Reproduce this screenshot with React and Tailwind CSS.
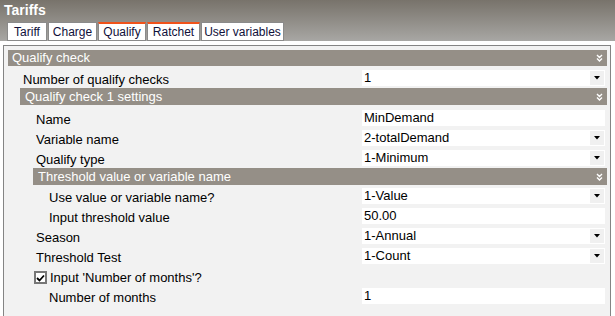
import React from "react";

const font = { fontFamily: '"Liberation Sans", Arial, sans-serif' };

const Chevrons = () => (
  <svg width="7" height="8" viewBox="0 0 7 8" className="shrink-0">
    <path d="M1 1 L3.5 3.5 L6 1 M1 4.5 L3.5 7 L6 4.5" fill="none" stroke="#ffffff" strokeWidth="1.4" />
  </svg>
);

const Bar = ({ title, className = "", textPad = "pl-[4px]" }) => (
  <div className={`flex items-center justify-between bg-[#958f87] text-white text-[13px] pr-[4px] ${textPad} ${className}`}>
    <span className="leading-[16px]">{title}</span>
    <Chevrons />
  </div>
);

const Field = ({ value, dropdown }) => (
  <div className="w-[243px] h-[16px] mr-[2px] bg-white flex items-center justify-between text-[13px] text-black">
    <span className="pl-[2px] leading-[16px]">{value}</span>
    {dropdown && (
      <div className="w-[14px] h-[14px] mr-[1px] bg-[#f0f0f0] flex items-center justify-center">
        <svg width="6" height="4" viewBox="0 0 6 4">
          <path d="M0 0 H6 L3 3.5 Z" fill="#000" />
        </svg>
      </div>
    )}
  </div>
);

const Row = ({ label, value, dropdown, pad }) => (
  <div className="flex items-center h-[20px]">
    <span className={`flex-1 text-[13px] text-black leading-[16px] pt-[3px] ${pad}`}>{label}</span>
    <Field value={value} dropdown={dropdown} />
  </div>
);

const tabs = [
  { name: "Tariff", w: "w-[40px]" },
  { name: "Charge", w: "w-[49px]" },
  { name: "Qualify", w: "w-[48px]", hot: true },
  { name: "Ratchet", w: "w-[53px]", hot: true },
  { name: "User variables", w: "w-[83px]" },
];

export default function App() {
  return (
    <div className="w-[615px] h-[316px] overflow-hidden bg-white" style={font}>
      <div className="h-[41px] bg-gradient-to-b from-[#78736b] to-[#a8a7a4] flex flex-col">
        <div className="pl-[4px] pt-[2px] text-white font-bold text-[14px] leading-[16px]">Tariffs</div>
        <div className="flex gap-[1px] pl-[7px] mt-[4px]">
          {tabs.map((t) => (
            <div
              key={t.name}
              className={`${t.w} h-[19px] bg-white border border-[#8a8a8a] ${t.hot ? "border-t-2 border-t-[#f0521a]" : ""} flex items-center justify-center text-[12px] text-[#10103a]`}
            >
              {t.name}
            </div>
          ))}
        </div>
      </div>

      <div className="mt-[4px] ml-[3px] w-[608px] h-[300px] border border-[#848484] bg-[#f2f2f2] pt-[4px] pl-[4px] pr-[3px]">
        <Bar title="Qualify check" className="h-[16px]" />
        <div className="mt-[2px]">
          <Row label="Number of qualify checks" value="1" dropdown pad="pl-[15px]" />
        </div>
        <Bar title="Qualify check 1 settings" className="h-[17px] ml-[12px]" textPad="pl-[5px]" />
        <div className="mt-[3px]">
          <Row label="Name" value="MinDemand" pad="pl-[28px]" />
          <Row label="Variable name" value="2-totalDemand" dropdown pad="pl-[28px]" />
          <Row label="Qualify type" value="1-Minimum" dropdown pad="pl-[28px]" />
        </div>
        <Bar title="Threshold value or variable name" className="h-[17px] ml-[25px]" textPad="pl-[5px]" />
        <div className="mt-[1px]">
          <Row label="Use value or variable name?" value="1-Value" dropdown pad="pl-[41px]" />
          <Row label="Input threshold value" value="50.00" pad="pl-[41px]" />
          <Row label="Season" value="1-Annual" dropdown pad="pl-[28px]" />
          <Row label="Threshold Test" value="1-Count" dropdown pad="pl-[28px]" />
          <div className="flex items-center h-[20px] pl-[26px] pt-[3px] gap-[3px] text-[13px] text-black">
            <div className="w-[13px] h-[13px] border-2 border-[#777777] bg-white flex items-center justify-center">
              <svg width="9" height="8" viewBox="0 0 9 8">
                <path d="M1 4 L3.5 6.5 L8 1.5" fill="none" stroke="#000" strokeWidth="1.8" />
              </svg>
            </div>
            <span className="leading-[16px]">Input 'Number of months'?</span>
          </div>
          <Row label="Number of months" value="1" pad="pl-[41px]" />
        </div>
      </div>
    </div>
  );
}
